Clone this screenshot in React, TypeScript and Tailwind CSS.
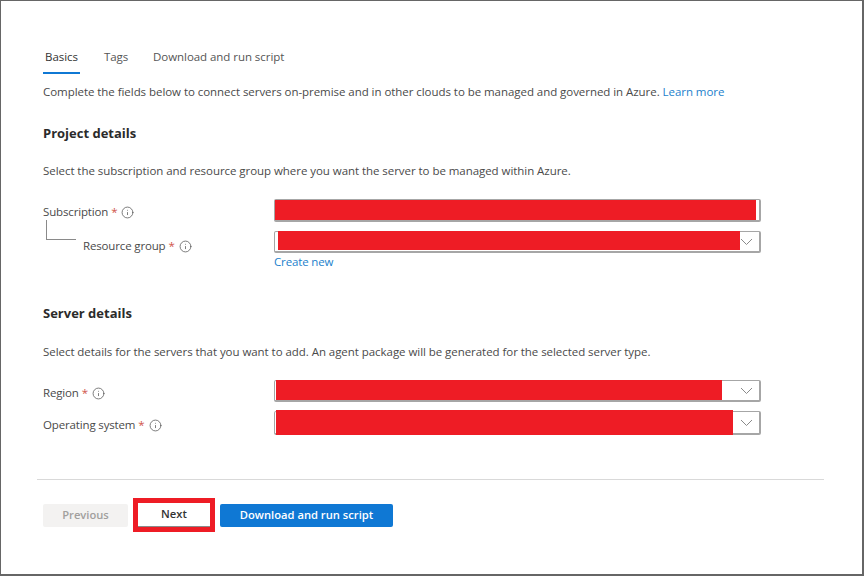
import { Info } from "lucide-react";

function Chevron() {
  return (
    <svg className="h-[8px] w-[13px] shrink-0 text-[#8a8a8a]" viewBox="0 0 13 8" fill="none">
      <path d="M1 1l5.5 5.5L12 1" stroke="currentColor" strokeWidth="1" />
    </svg>
  );
}

function FieldLabel({ text }: { text: string }) {
  return (
    <span className="flex items-center text-[11.5px] leading-[16px] tracking-[-0.15px] text-[#4a4a4a]">
      {text}
      <span className="ml-[3px] text-[#d0544b]">*</span>
      <Info className="ml-[4px] h-[13px] w-[13px] text-[#555]" strokeWidth={1.4} />
    </span>
  );
}

function Select({
  redWidth,
  redLeft,
  redClass,
  height,
  chevron = true,
}: {
  redWidth: number;
  redLeft: number;
  redClass: string;
  height: string;
  chevron?: boolean;
}) {
  return (
    <div
      className={`flex w-[487px] items-center rounded-[2px] border border-[#a6a6a6] border-b-2 border-r-2 ${height}`}
    >
      <div className={`shrink-0 bg-[#ee1c25] ${redClass}`} style={{ width: redWidth, marginLeft: redLeft }} />
      {chevron && (
        <div className="flex flex-1 justify-end pr-[6px]">
          <Chevron />
        </div>
      )}
    </div>
  );
}

export default function App() {
  return (
    <div className="h-[576px] w-[864px] overflow-hidden border border-[#666] border-b-2 border-r-2 bg-white font-['Open_Sans','Noto_Sans',sans-serif]">
      <div className="pl-[42px] pt-[46px]">
        <div className="flex text-[11.5px] leading-[20px] tracking-[-0.05px] text-[#555]">
          <div className="w-[37px] border-b-2 border-[#0f78d4] pb-[5px] pl-[2px] text-[#333]">Basics</div>
          <div className="ml-[24px] w-[49px]">Tags</div>
          <div>Download and run script</div>
        </div>

        <p className="mt-[9px] text-[11.5px] leading-[18px] tracking-[-0.05px] text-[#4a4a4a]">
          Complete the fields below to connect servers on-premise and in other clouds to be managed and governed in Azure.{" "}
          <span className="text-[#1b7fcc]">Learn more</span>
        </p>

        <h2 className="mt-[22px] text-[13px] leading-[20px] font-bold text-[#2b2b2b]">Project details</h2>
        <p className="mt-[19px] text-[11.5px] leading-[18px] tracking-[-0.05px] text-[#4a4a4a]">
          Select the subscription and resource group where you want the server to be managed within Azure.
        </p>

        <div className="mt-[19px] flex items-start">
          <div className="w-[231px] pt-[5px]">
            <FieldLabel text="Subscription" />
          </div>
          <Select redWidth={481} redLeft={0} redClass="h-[20px] -mt-[1px]" height="h-[23px]" chevron={false} />
        </div>

        <div className="mt-[9px] flex items-start">
          <div className="flex w-[231px]">
            <div className="-mt-[11px] ml-[3px] h-[20px] w-[30px] border-b border-l border-[#8a8a8a]" />
            <div className="ml-[7px] pt-[7px]">
              <FieldLabel text="Resource group" />
            </div>
          </div>
          <Select redWidth={462} redLeft={3} redClass="h-[19px] -mt-[2px]" height="h-[22px]" />
        </div>

        <div className="ml-[231px] -mt-[1px] mb-[-1px] text-[11.5px] leading-[18px] tracking-[-0.15px] text-[#1b7fcc]">
          Create new
        </div>

        <h2 className="mt-[33px] text-[13px] leading-[20px] font-bold text-[#2b2b2b]">Server details</h2>
        <p className="mt-[20px] text-[11.5px] leading-[18px] tracking-[-0.05px] text-[#4a4a4a]">
          Select details for the servers that you want to add. An agent package will be generated for the selected server type.
        </p>

        <div className="mt-[19px] flex items-start">
          <div className="w-[231px] pt-[5px]">
            <FieldLabel text="Region" />
          </div>
          <Select redWidth={446} redLeft={1} redClass="h-[20px] -mt-[2px]" height="h-[22px]" />
        </div>

        <div className="mt-[9px] flex items-start">
          <div className="w-[231px] pt-[6px]">
            <FieldLabel text="Operating system" />
          </div>
          <Select redWidth={457} redLeft={1} redClass="h-[25px] -mt-[1px]" height="h-[24px]" />
        </div>
      </div>

      <div className="mt-[44px] ml-[36px] h-px w-[787px] bg-[#d9d9d9]" />

      <div className="mt-[18px] ml-[42px] flex items-center text-[11.2px] font-semibold">
        <div className="flex h-[23px] w-[85px] items-center justify-center rounded-[2px] bg-[#f3f2f1] text-[#a19f9d]">
          Previous
        </div>
        <div className="ml-[5px] border-[5px] border-[#ee1c25]">
          <div className="flex h-[24px] w-[72px] items-center justify-center border-b border-[#8a8a8a] bg-white text-[#333]">
            Next
          </div>
        </div>
        <div className="ml-[5px] flex h-[23px] w-[173px] items-center justify-center rounded-[2px] bg-[#0f78d4] text-white">
          Download and run script
        </div>
      </div>
    </div>
  );
}
